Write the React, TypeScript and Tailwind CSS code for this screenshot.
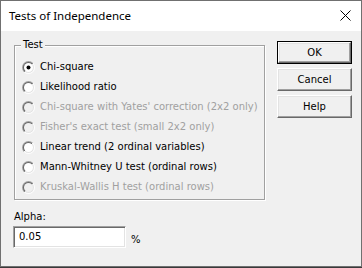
import React from "react";

const dlgFont = { fontFamily: '"DejaVu Sans", "Liberation Sans", sans-serif' };

function Radio({ checked, disabled }: { checked?: boolean; disabled?: boolean }) {
  return (
    <svg width="13" height="13" viewBox="0 0 13 13" className="shrink-0">
      <defs>
        <linearGradient id="ro" x1="0" y1="0" x2="1" y2="1">
          <stop offset="0.5" stopColor="#a0a0a0" />
          <stop offset="0.5" stopColor="#ffffff" />
        </linearGradient>
        <linearGradient id="ri" x1="0" y1="0" x2="1" y2="1">
          <stop offset="0.5" stopColor="#696969" />
          <stop offset="0.5" stopColor="#e3e3e3" />
        </linearGradient>
      </defs>
      <circle cx="6.5" cy="6.5" r="6.5" fill="url(#ro)" />
      <circle cx="6.5" cy="6.5" r="5.5" fill="url(#ri)" />
      <circle cx="6.5" cy="6.5" r="4.5" fill={disabled ? "#f0f0f0" : "#ffffff"} />
      {checked && <circle cx="6.5" cy="6.5" r="2" fill="#000" />}
    </svg>
  );
}

function Option({ label, checked, disabled }: { label: string; checked?: boolean; disabled?: boolean }) {
  return (
    <div className="flex items-center h-[20px] pl-[7px] gap-[5px]">
      <Radio checked={checked} disabled={disabled} />
      <span className={disabled ? "text-[#a0a0a0]" : "text-black"}>{label}</span>
    </div>
  );
}

function Btn({ label, def }: { label: string; def?: boolean }) {
  const inner = (
    <div className="flex items-center justify-center h-full w-full border border-t-white border-l-white border-b-[#696969] border-r-[#696969] shadow-[inset_-1px_-1px_0_#a0a0a0,inset_1px_1px_0_#e3e3e3] bg-[#f0f0f0] text-black">
      {label}
    </div>
  );
  return (
    <div className={`w-[75px] h-[23px] ${def ? "border border-black" : ""}`}>{inner}</div>
  );
}

export default function App() {
  return (
    <div className="w-[362px] h-[268px] bg-[#3a3a3a]">
      <div className="w-[362px] h-[267px] border border-[#707070] flex flex-col bg-[#f0f0f0]">
        <div className="h-[30px] bg-white flex items-center justify-between pl-[8px] pr-[10px] shrink-0">
          <span className="text-[11.5px] text-black leading-none" style={{ fontFamily: '"Noto Sans", sans-serif' }}>
            Tests of Independence
          </span>
          <svg width="11" height="11" viewBox="0 0 11 11" className="-mt-[1px]">
            <path d="M0.5 0.5 L10.5 10.5 M10.5 0.5 L0.5 10.5" stroke="#000" strokeWidth="1" />
          </svg>
        </div>
        <div className="flex flex-1 text-[10px] leading-[14px]" style={dlgFont}>
          <div className="flex flex-col pl-[13px] pt-[14px]">
            <div className="w-[251px] h-[155px] border border-[#a0a0a0] shadow-[1px_1px_0_#ffffff,inset_1px_1px_0_#ffffff] flex flex-col">
              <div className="ml-[6px] -mt-[8px] px-[2px] bg-[#f0f0f0] self-start text-black h-[14px]">Test</div>
              <div className="flex flex-col pt-[5px]">
                <Option label="Chi-square" checked />
                <Option label="Likelihood ratio" />
                <Option label="Chi-square with Yates' correction (2x2 only)" disabled />
                <Option label="Fisher's exact test (small 2x2 only)" disabled />
                <Option label="Linear trend (2 ordinal variables)" />
                <Option label="Mann-Whitney U test (ordinal rows)" />
                <Option label="Kruskal-Wallis H test (ordinal rows)" disabled />
              </div>
            </div>
            <div className="mt-[10px] text-black">Alpha:</div>
            <div className="flex items-end mt-[2px] -ml-px">
              <div className="w-[113px] h-[22px] bg-white border border-t-[#a0a0a0] border-l-[#a0a0a0] border-b-white border-r-white shadow-[inset_1px_1px_0_#696969,inset_-1px_-1px_0_#e3e3e3] flex items-center pl-[5px] text-black">
                0.05
              </div>
              <span className="ml-[5px] mb-[1px] text-black">%</span>
            </div>
          </div>
          <div className="flex flex-col gap-[4px] ml-[12px] mt-[10px]">
            <Btn label="OK" def />
            <Btn label="Cancel" />
            <Btn label="Help" />
          </div>
        </div>
      </div>
    </div>
  );
}
